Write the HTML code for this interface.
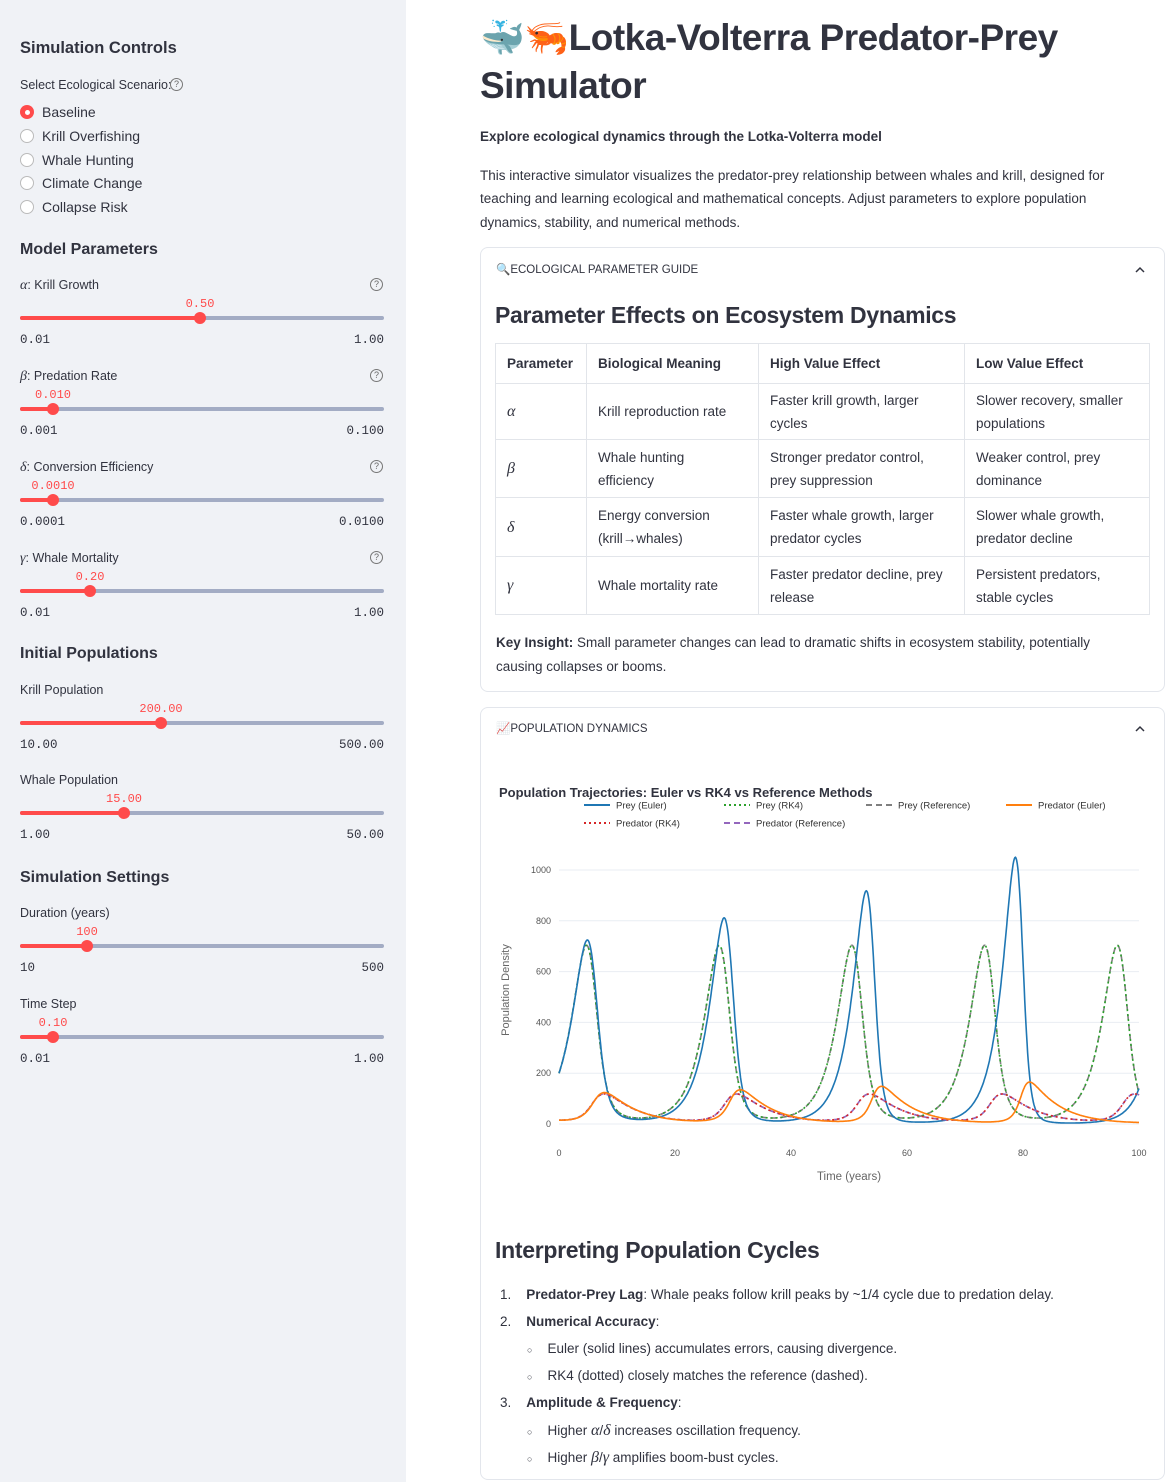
<!DOCTYPE html>
<html><head><meta charset="utf-8"><style>
*{margin:0;padding:0;box-sizing:border-box}
html,body{width:1174px;height:1482px;overflow:hidden}
body{position:relative;background:#fff;font-family:"Liberation Sans",sans-serif;color:#31333f}
#side{position:absolute;left:0;top:0;width:406px;height:1482px;background:#f0f2f6}
.t{position:absolute;white-space:nowrap;line-height:1}
.mono{font-family:"Liberation Mono",monospace}
.box{position:absolute;border:1px solid #e3e6ec;border-radius:8px}
table{position:absolute;left:495px;top:343px;width:655px;border-collapse:collapse;font-size:13.5px;table-layout:fixed}
td,th{border:1px solid #e2e5ea;padding:0 11px;text-align:left;vertical-align:middle;line-height:23px}
th{height:40px;font-weight:bold}
i.m{font-family:"Liberation Serif",serif;font-size:16px}
</style></head><body>
<div id="side"></div>
<div id="root"></div>
<div class="box" style="left:480px;top:247px;width:685px;height:445px"></div>
<div class="box" style="left:480px;top:707px;width:685px;height:773px"></div>
<table>
<tr><th style="width:91px">Parameter</th><th style="width:172px">Biological Meaning</th><th style="width:206px">High Value Effect</th><th>Low Value Effect</th></tr>
<tr style="height:56px"><td><i class="m">α</i></td><td>Krill reproduction rate</td><td>Faster krill growth, larger cycles</td><td>Slower recovery, smaller populations</td></tr>
<tr style="height:58px"><td><i class="m">β</i></td><td>Whale hunting<br>efficiency</td><td>Stronger predator control, prey suppression</td><td>Weaker control, prey dominance</td></tr>
<tr style="height:59px"><td><i class="m">δ</i></td><td>Energy conversion (krill→whales)</td><td>Faster whale growth, larger predator cycles</td><td>Slower whale growth, predator decline</td></tr>
<tr style="height:58px"><td><i class="m">γ</i></td><td>Whale mortality rate</td><td>Faster predator decline, prey release</td><td>Persistent predators, stable cycles</td></tr>
</table>
<svg id="chart" width="1174" height="1482" style="position:absolute;left:0;top:0;pointer-events:none"></svg>
<script>
var R=document.getElementById('root');
function T(x,y,s,txt,st){var d=document.createElement('div');d.className='t';d.style.left=x+'px';d.style.top=(y+1.5-s*0.55)+'px';d.style.fontSize=s+'px';if(st)d.style.cssText+=st;d.innerHTML=txt;R.appendChild(d);return d;}
T(20,48,16.5,'Simulation Controls','font-weight:bold');
T(20,84,12.5,'Select Ecological Scenario:');
function help(x,y){T(x,y,13,'?','width:13px;height:13px;border:1px solid #777;border-radius:50%;font-size:9px;line-height:11px;text-align:center;color:#666');}
help(170,84);
var rs=['Baseline','Krill Overfishing','Whale Hunting','Climate Change','Collapse Risk'],ry=[111,135,159,182,206];
rs.forEach(function(r,i){T(42,ry[i],14,r);
var c=document.createElement('div');c.style.cssText='position:absolute;left:20px;top:'+(ry[i]-6)+'px;width:14px;height:14px;border-radius:50%;'+(i==0?'background:#ff4b4b;':'background:#fff;border:1px solid #bbb');
if(i==0)c.innerHTML='<div style="position:absolute;left:4.5px;top:4.5px;width:5px;height:5px;border-radius:50%;background:#fff"></div>';R.appendChild(c);});
T(20,249,16,'Model Parameters','font-weight:bold');
function slider(ly,label,val,thumb,mn,mx,h){T(20,ly,12.5,label);if(h)help(370,ly);
var v=T(thumb,ly+19,12,val,'color:#ff4b4b');v.classList.add('mono');v.style.transform='translateX(-50%)';
var ty=ly+34;var a=document.createElement('div');a.style.cssText='position:absolute;left:20px;top:'+(ty-2)+'px;width:364px;height:4px;border-radius:2px;background:#a3acc4';R.appendChild(a);
var b=document.createElement('div');b.style.cssText='position:absolute;left:20px;top:'+(ty-2)+'px;width:'+(thumb-20)+'px;height:4px;border-radius:2px;background:#ff4b4b';R.appendChild(b);
var c=document.createElement('div');c.style.cssText='position:absolute;left:'+(thumb-6)+'px;top:'+(ty-6)+'px;width:12px;height:12px;border-radius:50%;background:#ff4b4b';R.appendChild(c);
var m=T(20,ly+55,12.5,mn);m.classList.add('mono');var M=T(20,ly+55,12.5,mx);M.classList.add('mono');M.style.left='';M.style.right=(1174-384)+'px';}
slider(284,'<i class="m" style="font-size:14px">α</i>: Krill Growth','0.50',200,'0.01','1.00',1);
slider(375,'<i class="m" style="font-size:14px">β</i>: Predation Rate','0.010',53,'0.001','0.100',1);
slider(466,'<i class="m" style="font-size:14px">δ</i>: Conversion Efficiency','0.0010',53,'0.0001','0.0100',1);
slider(557,'<i class="m" style="font-size:14px">γ</i>: Whale Mortality','0.20',90,'0.01','1.00',1);
T(20,653,16,'Initial Populations','font-weight:bold');
slider(689,'Krill Population','200.00',161,'10.00','500.00');
slider(779,'Whale Population','15.00',124,'1.00','50.00');
T(20,877,16,'Simulation Settings','font-weight:bold');
slider(912,'Duration (years)','100',87,'10','500');
slider(1003,'Time Step','0.10',53,'0.01','1.00');
T(480,38,37,'<span style="font-size:36px">🐳🦐</span>Lotka-Volterra Predator-Prey','font-weight:bold;letter-spacing:-0.5px');
T(480,86,37,'Simulator','font-weight:bold;letter-spacing:-0.5px');
T(480,136,13.5,'Explore ecological dynamics through the Lotka-Volterra model','font-weight:bold');
T(480,175,13.5,'This interactive simulator visualizes the predator-prey relationship between whales and krill, designed for');
T(480,198,13.5,'teaching and learning ecological and mathematical concepts. Adjust parameters to explore population');
T(480,222,13.5,'dynamics, stability, and numerical methods.');
T(496,270,11.5,'🔍ECOLOGICAL PARAMETER GUIDE');
T(495,315,23,'Parameter Effects on Ecosystem Dynamics','font-weight:bold;letter-spacing:-0.3px');
T(496,642,13.5,'<b>Key Insight:</b> Small parameter changes can lead to dramatic shifts in ecosystem stability, potentially');
T(496,666,13.5,'causing collapses or booms.');
T(496,729,11.5,'📈POPULATION DYNAMICS');
T(499,792,13,'Population Trajectories: Euler vs RK4 vs Reference Methods','font-weight:bold');
T(495,1250,23,'Interpreting Population Cycles','font-weight:bold;letter-spacing:-0.3px');
T(500,1294,13.5,'1.&nbsp;&nbsp;&nbsp;&nbsp;<b>Predator-Prey Lag</b>: Whale peaks follow krill peaks by ~1/4 cycle due to predation delay.');
T(500,1321,13.5,'2.&nbsp;&nbsp;&nbsp;&nbsp;<b>Numerical Accuracy</b>:');
T(527,1348,13.5,'<span style="font-size:9px">○</span>&nbsp;&nbsp;&nbsp;&nbsp;Euler (solid lines) accumulates errors, causing divergence.');
T(527,1375,13.5,'<span style="font-size:9px">○</span>&nbsp;&nbsp;&nbsp;&nbsp;RK4 (dotted) closely matches the reference (dashed).');
T(500,1402,13.5,'3.&nbsp;&nbsp;&nbsp;&nbsp;<b>Amplitude &amp; Frequency</b>:');
T(527,1429,13.5,'<span style="font-size:9px">○</span>&nbsp;&nbsp;&nbsp;&nbsp;Higher <i class="m">α</i>/<i class="m">δ</i> increases oscillation frequency.');
T(527,1456,13.5,'<span style="font-size:9px">○</span>&nbsp;&nbsp;&nbsp;&nbsp;Higher <i class="m">β</i>/<i class="m">γ</i> amplifies boom-bust cycles.');
var S=document.getElementById('chart'),h='';
h+='<path d="M1136,272 L1140,268 L1144,272" fill="none" stroke="#31333f" stroke-width="1.5"/><path d="M1136,731 L1140,727 L1144,731" fill="none" stroke="#31333f" stroke-width="1.5"/>';
function X(t){return 559+t*5.8}function Y(v){return 1124-v*0.254}
for(var g=0;g<=1000;g+=200){h+='<line x1="559" x2="1139" y1="'+Y(g)+'" y2="'+Y(g)+'" stroke="#e9edf3" stroke-width="1"/>';h+='<text x="551" y="'+(Y(g)+3)+'" font-size="9" fill="#555" text-anchor="end" font-family="Liberation Sans">'+g+'</text>';}
for(var k=0;k<=100;k+=20)h+='<text x="'+X(k)+'" y="1156" font-size="9" fill="#555" text-anchor="middle" font-family="Liberation Sans">'+k+'</text>';
h+='<text x="849" y="1180" font-size="11.5" fill="#666" text-anchor="middle" font-family="Liberation Sans">Time (years)</text>';
h+='<text transform="translate(509,990) rotate(-90)" font-size="11" fill="#666" text-anchor="middle" font-family="Liberation Sans">Population Density</text>';
var a=0.5,b=0.01,d=0.001,gm=0.2;
function f(x,y){return [a*x-b*x*y,d*x*y-gm*y]}
function sim(dt,rk){var x=200,y=15,P=[[0,x,y]],n=Math.round(100/dt);for(var i=1;i<=n;i++){if(rk){var k1=f(x,y),k2=f(x+dt/2*k1[0],y+dt/2*k1[1]),k3=f(x+dt/2*k2[0],y+dt/2*k2[1]),k4=f(x+dt*k3[0],y+dt*k3[1]);x+=dt/6*(k1[0]+2*k2[0]+2*k3[0]+k4[0]);y+=dt/6*(k1[1]+2*k2[1]+2*k3[1]+k4[1]);}else{var k=f(x,y);x+=dt*k[0];y+=dt*k[1];}P.push([i*dt,x,y]);}return P;}
function path(P,j,col,dash){var s='M';P.forEach(function(p,i){s+=(i?'L':'')+X(p[0]).toFixed(1)+','+Y(p[j]).toFixed(1)});return '<path d="'+s+'" fill="none" stroke="'+col+'" stroke-width="1.6"'+(dash?' stroke-dasharray="'+dash+'"':'')+'/>';}
var E=sim(0.1,0),K=sim(0.1,1),Rf=sim(0.02,1);
h+=path(Rf,1,'#7f7f7f','6,4')+path(K,1,'#2ca02c','2,3')+path(E,1,'#1f77b4')+path(Rf,2,'#9467bd','6,4')+path(K,2,'#d62728','2,3')+path(E,2,'#ff7f0e');
function leg(x,y,col,dash,txt){h+='<line x1="'+x+'" x2="'+(x+26)+'" y1="'+y+'" y2="'+y+'" stroke="'+col+'" stroke-width="2"'+(dash?' stroke-dasharray="'+dash+'"':'')+'/><text x="'+(x+32)+'" y="'+(y+3.5)+'" font-size="9.5" fill="#333" font-family="Liberation Sans">'+txt+'</text>';}
leg(584,805,'#1f77b4','','Prey (Euler)');leg(724,805,'#2ca02c','2,3','Prey (RK4)');leg(866,805,'#7f7f7f','6,4','Prey (Reference)');leg(1006,805,'#ff7f0e','','Predator (Euler)');
leg(584,823,'#d62728','2,3','Predator (RK4)');leg(724,823,'#9467bd','6,4','Predator (Reference)');
S.innerHTML=h;
</script>
</body></html>
